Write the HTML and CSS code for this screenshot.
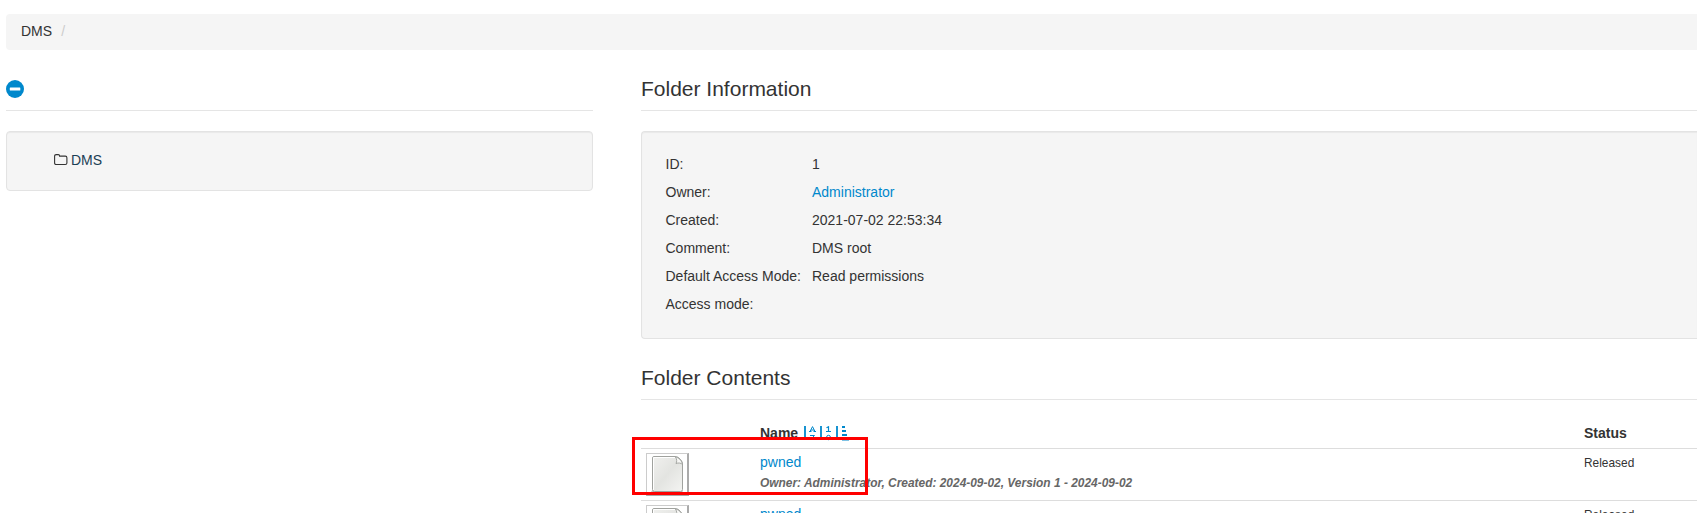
FILE: index.html
```
<!DOCTYPE html>
<html lang="en">
<head>
<meta charset="utf-8">
<title>DMS</title>
<link rel="stylesheet" href="styles.css">
</head>
<body>
<svg class="defs" aria-hidden="true">
  <defs>
    <linearGradient id="paper" x1="0" y1="0" x2="1" y2="1"><stop offset="0" stop-color="#f1f1ef"/><stop offset=".5" stop-color="#e3e4e1"/><stop offset="1" stop-color="#f4f4f2"/></linearGradient>
    <symbol id="doc" viewBox="0 0 40 40">
      <ellipse cx="20" cy="37.400" rx="16" ry="1.500" fill="#999" opacity=".6"/>
      <path d="M7 2.500H28Q31 2.500 33 5Q35.500 7.500 35.500 10V35.500Q35.500 37.500 33.500 37.500H7.500Q5.500 37.500 5.500 35.500V4Q5.500 2.500 7 2.500Z" fill="url(#paper)" stroke="#a0a29e"/>
      <path d="M6.500 36V3.500H28" fill="none" stroke="#fff"/>
      <path d="M28.500 3C30 5.500 30 7.500 29 9.500C31.500 8.500 34 9 35.500 10.500C35 7 32 3.500 28.500 3Z" fill="#f7f7f5" stroke="#969894" stroke-width=".8"/>
    </symbol>
  </defs>
</svg>
<nav class="breadcrumb"><span>DMS</span><span class="divider">/</span></nav>
<main class="columns">
  <aside class="sidebar">
    <div class="legend"><svg class="collapse" viewBox="0 0 18 18"><circle cx="9" cy="9" r="9" fill="#08c"/><rect x="3.800" y="7.500" width="10.500" height="3" rx=".5" fill="#fff"/></svg></div>
    <div class="well tree"><svg class="folder" viewBox="0 0 14 12"><path d="M.6 2.200Q.6.600 2.200.600H4.300Q5.600.600 5.600 2.100H11.300Q12.900 2.100 12.900 3.700V9Q12.900 10.500 11.300 10.500H2.200Q.6 10.500.6 9Z" fill="none" stroke="#333" stroke-width="1.100"/></svg><a>DMS</a></div>
  </aside>
  <section class="content">
    <div class="legend">Folder Information</div>
    <div class="well">
      <dl class="info">
        <dt>ID:</dt><dd>1</dd>
        <dt>Owner:</dt><dd><a class="link">Administrator</a></dd>
        <dt>Created:</dt><dd>2021-07-02 22:53:34</dd>
        <dt>Comment:</dt><dd>DMS root</dd>
        <dt>Default Access Mode:</dt><dd>Read permissions</dd>
        <dt>Access mode:</dt><dd></dd>
      </dl>
    </div>
    <div class="legend">Folder Contents</div>
    <div class="files">
      <div class="row head"><span></span><span class="name">Name
        <svg class="sort" viewBox="0 0 46 15" fill="none" stroke="#08c"><path d="M1 0V14M17 0V14M33 0V14" stroke-width="1.800"/><path d="M6 5.500L8.500.600 11 5.500M7 4H10M5 5.500H7.500M9.500 5.500H12M6 9.500H10.500L6.500 13.500H11" stroke-width="1"/><path d="M22.500 1.800L24.500.800V5.500M22 5.500H27" stroke-width="1.200"/><ellipse cx="24.500" cy="11.500" rx="2" ry="2.200" stroke-width="1"/><path d="M38 1H41M38 5H42M38 9H43M38 13.500H45" stroke-width="2"/></svg></span><span>Status</span></div>
      <div class="row"><span class="thumb"><svg><use href="#doc"/></svg></span><span><a class="link">pwned</a><small>Owner: Administrator, Created: 2024-09-02, Version 1 - 2024-09-02</small></span><span class="status">Released</span></div>
      <div class="row"><span class="thumb"><svg><use href="#doc"/></svg></span><span><a class="link">pwned</a></span><span class="status">Released</span></div>
    </div>
  </section>
</main>
<div class="highlight"></div>
</body>
</html>
```
FILE: styles.css
```
* { box-sizing: border-box; }
html { overflow: hidden; height: 513px; }
body { margin: 0; padding: 14px 0 0 6px; height: 513px; overflow: hidden; background: #fff; color: #333; font: 14px/20px "Nimbus Sans", "Liberation Sans", Arial, sans-serif; }
.defs { position: absolute; width: 0; height: 0; }
.breadcrumb { height: 36px; padding: 7px 15px; margin-bottom: 20px; background: #f5f5f5; border-radius: 4px 0 0 4px; display: flex; gap: 9px; }
.divider { color: #ccc; }
.columns { display: grid; grid-template-columns: 587px 1fr; column-gap: 48px; }
.sidebar { width: 587px; }
.legend { height: 41px; margin-bottom: 20px; border-bottom: 1px solid #e5e5e5; font-size: 21px; line-height: 38px; }
.sidebar .legend { padding-top: 9.500px; }
.collapse { display: block; width: 18px; height: 18px; }
.well { padding: 19px; margin-bottom: 20px; background: #f5f5f5; border: 1px solid #e3e3e3; border-radius: 4px; box-shadow: inset 0 1px 1px rgba(0,0,0,.05); }
.content .well { height: 208px; border-right: 0; border-radius: 4px 0 0 4px; padding-top: 18px; }
.tree { height: 60px; padding: 18px 19px 19px 47px; display: flex; }
.tree a { color: #1c3f55; }
.folder { width: 14px; height: 12px; margin: 4px 3px 0 0; }
.info { display: grid; grid-template-columns: 146.500px 1fr; margin: 0; padding-left: 4.500px; grid-auto-rows: 28px; line-height: 28px; }
.info dd { margin: 0; }
.link { color: #08c; }
.row { display: grid; grid-template-columns: 119px 824px 1fr; height: 52px; padding-top: 3px; border-top: 1px solid #ddd; }
.head { height: 28px; border: 0; padding-top: 3px; font-weight: bold; }
.name { display: flex; gap: 6px; }
.sort { width: 46px; height: 15px; margin-top: 3px; }
.thumb { width: 43px; height: 43px; margin: 1px 0 0 5px; border: 1px solid #ccc; border-right: 2px solid #aaa; border-bottom: 2px solid #aaa; }
.thumb svg { display: block; width: 40px; height: 40px; }
.row small { display: block; padding-top: 1px; color: #666; font-size: 11.930px; font-style: italic; font-weight: bold; }
.status { padding-top: 1px; font-size: 11.900px; }
.highlight { position: absolute; left: 632px; top: 437px; width: 236px; height: 58px; border: 3px solid #f00; }
```
